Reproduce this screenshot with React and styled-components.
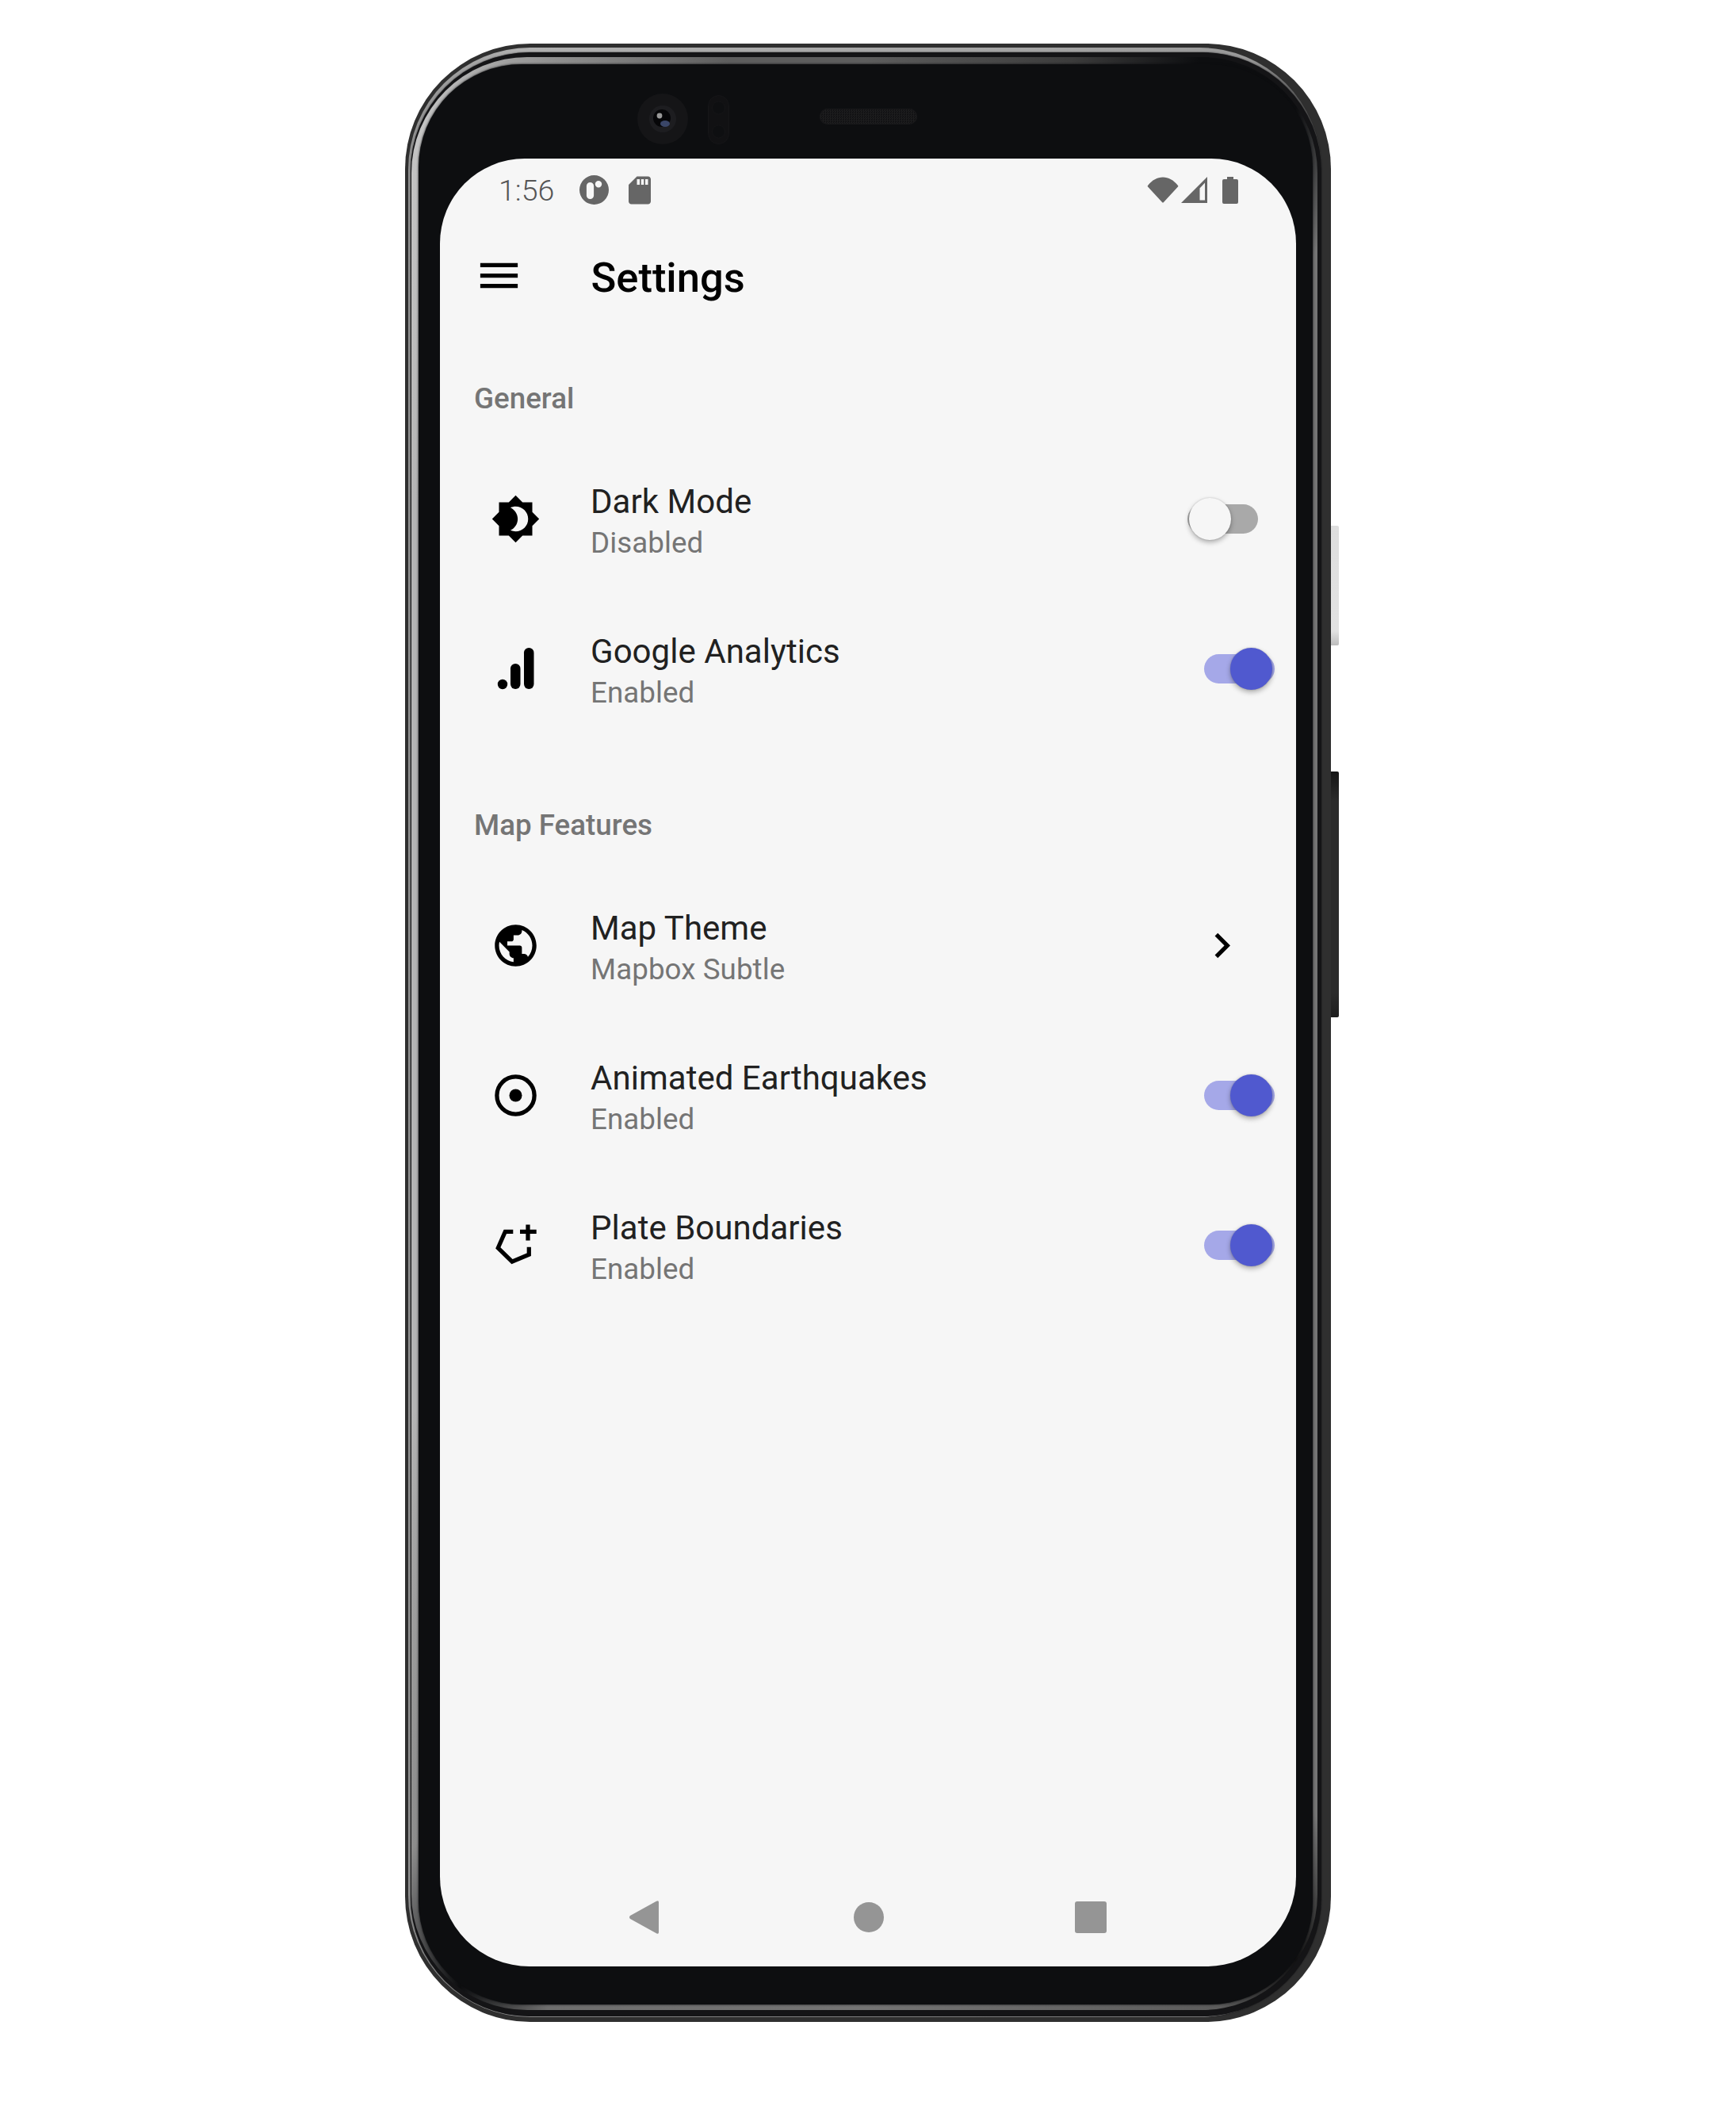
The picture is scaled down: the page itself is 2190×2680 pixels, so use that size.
import React from "react";
import styled, { createGlobalStyle } from "styled-components";

const Global = createGlobalStyle`
  html, body { margin: 0; padding: 0; background: #fff; }
  #root { width: 2190px; height: 2680px; }
`;

const Page = styled.div`
  width: 2190px;
  height: 2680px;
  box-sizing: border-box;
  padding: 55px 0 0 511px;
  background: #fff;
  font-family: Roboto, "Liberation Sans", sans-serif;
`;

const Frame = styled.div`
  position: relative;
  width: 1168px;
  height: 2495px;
  box-sizing: border-box;
  padding: 5px 12px 6px 4px;
  background: #2f2f2f;
  border-radius: 158px;
`;

const SideButton = styled.div`
  position: absolute;
  left: 100%;
  top: ${(p) => p.$top}px;
  width: 10px;
  height: ${(p) => p.$height}px;
  border-radius: 0 2px 2px 0;
  background: ${(p) =>
    p.$light
      ? "linear-gradient(to bottom, #dedede 0, #e2e2e2 88%, #bdbdbd 100%), #e0e0e0"
      : "linear-gradient(to bottom, #161616 0, #2b2b2b 12%, #2b2b2b 90%, #1e1e1e 100%)"};
`;

const OuterStripe = styled.div`
  height: 100%;
  box-sizing: border-box;
  padding: 6px 0 1px 3px;
  border-radius: 154px;
  background: linear-gradient(to right, #909090 0, #b0b0b0 12%, #a4a4a4 70%, #999 92%, #444 100%);
`;

const DarkGap = styled.div`
  height: 100%;
  box-sizing: border-box;
  padding: 6px 5px 8px 1px;
  border-radius: 150px;
  background: #141416;
  box-shadow: 0 0 2px #141416;
`;

const InnerStripe = styled.div`
  height: 100%;
  box-sizing: border-box;
  padding: 9px 6px 7px 9px;
  border-radius: 146px;
  background: conic-gradient(
    #5e5e5e 0deg,
    #3c3c3c 12deg,
    #0d0e10 19deg,
    #0d0e10 25deg,
    #747474 30deg,
    #747474 150deg,
    #111 155deg,
    #5c5c5c 160deg,
    #747474 180deg,
    #6e6e6e 198deg,
    #0d0e10 203deg,
    #8c8c8c 209deg,
    #b4b4b4 230deg,
    #b4b4b4 320deg,
    #c4c4c4 334deg,
    #929292 342deg,
    #5e5e5e 352deg
  );
`;

const Bezel = styled.div`
  height: 100%;
  box-sizing: border-box;
  padding: 0 21px 48px 27px;
  border-radius: 130px;
  background: #0d0e10;
  box-shadow: 0 0 3px #0d0e10;
`;

const TopStrip = styled.div`
  height: 119px;
  box-sizing: border-box;
  padding: 37px 0 0 249px;
  display: flex;
  align-items: flex-start;
`;

const CameraSvg = styled.svg`
  width: 64px;
  height: 64px;
  flex: none;
`;

const SensorPill = styled.svg`
  width: 27px;
  height: 62px;
  margin: 2px 0 0 25px;
  flex: none;
`;

const Speaker = styled.div`
  width: 123px;
  height: 20px;
  margin: 19px 0 0 114px;
  flex: none;
  border-radius: 10px;
  box-shadow: inset 0 0 0 1px #18181a;
  background: repeating-conic-gradient(#1d1d1e 0 25%, #111113 0 50%) 0 0 / 3px 3px;
`;

const Screen = styled.div`
  width: 1080px;
  height: 2280px;
  display: flex;
  flex-direction: column;
  overflow: hidden;
  border-radius: 107px 107px 113px 113px;
  background: #f6f6f6;
`;

const StatusBar = styled.div`
  height: 63px;
  flex: none;
  box-sizing: border-box;
  padding: 16px 73px 0 74px;
  display: flex;
  align-items: center;
  justify-content: space-between;
  color: #666;
`;

const StatusGroup = styled.div`
  display: flex;
  align-items: center;
  gap: ${(p) => p.$gap || 0}px;
`;

const Time = styled.span`
  width: 71px;
  margin-right: 31px;
  font-size: 37.5px;
  font-weight: 300;
  line-height: 40px;
  color: #555;
  white-space: nowrap;
`;

const StatusIcon = styled.svg`
  display: block;
  flex: none;
  fill: #666;
  margin-left: ${(p) => p.$ml || 0}px;
`;

const AppBar = styled.div`
  height: 168px;
  flex: none;
  display: flex;
  align-items: center;
`;

const MenuIcon = styled.svg`
  width: 63px;
  height: 63px;
  margin-left: 42.5px;
  flex: none;
  fill: #000;
`;

const Title = styled.h1`
  margin: 6px 0 0 85px;
  font-size: 52.5px;
  font-weight: 500;
  line-height: 60px;
  color: #000;
`;

const SectionLabel = styled.div`
  height: 129px;
  flex: none;
  box-sizing: border-box;
  margin-top: ${(p) => p.$mt || 0}px;
  padding: 50px 0 0 43px;
  font-size: 36.75px;
  font-weight: 500;
  line-height: 44px;
  color: #757575;
`;

const Row = styled.div`
  height: 189.3px;
  flex: none;
  display: flex;
  align-items: center;
  box-sizing: border-box;
  padding: 0 27px 0 64px;
`;

const RowIcon = styled.svg`
  width: 63px;
  height: 63px;
  flex: none;
  fill: #000;
`;

const RowText = styled.div`
  flex: 1;
  margin-left: 63px;
  padding-top: 5px;
`;

const RowTitle = styled.div`
  font-size: 42px;
  line-height: 55px;
  letter-spacing: 0.03px;
  color: #212121;
`;

const RowSub = styled.div`
  font-size: 36.75px;
  line-height: 49px;
  letter-spacing: 0.06px;
  color: #757575;
`;

const Track = styled.div`
  position: relative;
  width: 89px;
  height: 37px;
  flex: none;
  margin-right: ${(p) => (p.$on ? 0 : 21)}px;
  border-radius: 18.5px;
  background: ${(p) => (p.$on ? "#a5a8e8" : "#a9a9a9")};
`;

const Thumb = styled.div`
  position: absolute;
  top: -8px;
  left: ${(p) => (p.$on ? 33.4 : 1.5)}px;
  width: 53px;
  height: 53px;
  border-radius: 50%;
  background: ${(p) => (p.$on ? "#5059cf" : "#f6f6f6")};
  box-shadow: 0 3px 6px rgba(0, 0, 0, 0.3), 0 0 2px rgba(0, 0, 0, 0.2);
`;

const Chevron = styled.svg`
  width: 63px;
  height: 63px;
  flex: none;
  margin-right: 35px;
  fill: #000;
`;

const Spacer = styled.div`
  flex: 1;
`;

const NavBar = styled.div`
  height: 126px;
  flex: none;
  box-sizing: border-box;
  padding: 0 0 0 239px;
  display: flex;
  align-items: center;
  margin-bottom: -1px;
`;

const NavBack = styled.svg`
  width: 37px;
  height: 42px;
  flex: none;
  fill: #959595;
`;

const NavHome = styled.div`
  width: 38px;
  height: 38px;
  margin-left: 246px;
  flex: none;
  border-radius: 50%;
  background: #959595;
`;

const NavRecent = styled.div`
  width: 40px;
  height: 40px;
  margin-left: 241px;
  flex: none;
  border-radius: 3px;
  background: #959595;
`;

const Switch = ({ on }) => (
  <Track $on={on}>
    <Thumb $on={on} />
  </Track>
);

const icons = {
  dark: (
    <path d="M20 8.69V4h-4.69L12 .69 8.69 4H4v4.69L.69 12 4 15.31V20h4.69L12 23.31 15.31 20H20v-4.69L23.31 12 20 8.69zM12 18c-.89 0-1.74-.2-2.5-.55C11.56 16.5 13 14.42 13 12s-1.44-4.5-3.5-5.45C10.26 6.2 11.11 6 12 6c3.31 0 6 2.69 6 6s-2.69 6-6 6z" />
  ),
  analytics: (
    <g transform="scale(0.38095) translate(0 1)">
      <circle cx="15" cy="50" r="6.2" />
      <rect x="25" y="24" width="12.5" height="32" rx="6.2" />
      <rect x="42" y="4" width="12.5" height="52" rx="6.2" />
    </g>
  ),
  globe: (
    <path d="M12 2C6.48 2 2 6.48 2 12s4.48 10 10 10 10-4.48 10-10S17.52 2 12 2zm-1 17.93c-3.95-.49-7-3.85-7-7.93 0-.62.08-1.21.21-1.79L9 15v1c0 1.1.9 2 2 2v1.93zm6.9-2.54c-.26-.81-1-1.39-1.9-1.39h-1v-3c0-.55-.45-1-1-1H8v-2h2c.55 0 1-.45 1-1V7h2c1.1 0 2-.9 2-2v-.41c2.93 1.19 5 4.06 5 7.41 0 2.08-.8 3.97-2.1 5.39z" />
  ),
  target: (
    <>
      <circle cx="12" cy="12" r="3.05" />
      <circle cx="12" cy="12" r="9" fill="none" stroke="#000" strokeWidth="2" />
    </>
  ),
  plate: (
    <g transform="scale(0.38095)" fill="none" stroke="#000" strokeWidth="5.25">
      <path d="M28.3 14.5H18.3L9.3 34.8 27 52.2 48.3 43.2V33.8" />
      <path d="M47 5.5V25.5M37 14.5H57.7" />
    </g>
  ),
};

const SettingRow = ({ icon, title, sub, on, chevron }) => (
  <Row>
    <RowIcon viewBox="0 0 24 24">{icons[icon]}</RowIcon>
    <RowText>
      <RowTitle>{title}</RowTitle>
      <RowSub>{sub}</RowSub>
    </RowText>
    {chevron ? (
      <Chevron viewBox="0 0 24 24">
        <path d="M10 6L8.59 7.41 13.17 12l-4.58 4.59L10 18l6-6z" />
      </Chevron>
    ) : (
      <Switch on={on} />
    )}
  </Row>
);

export default function App() {
  return (
    <Page>
      <Global />
      <Frame>
        <SideButton $light $top={608} $height={151} />
        <SideButton $top={918} $height={310} />
        <OuterStripe>
          <DarkGap>
            <InnerStripe>
              <Bezel>
                <TopStrip>
                  <CameraSvg viewBox="0 0 64 64">
                    <circle cx="32" cy="32" r="32" fill="#151517" />
                    <circle cx="32" cy="32" r="17" fill="#1d1d20" />
                    <circle cx="31" cy="31" r="11" fill="#060608" />
                    <ellipse cx="35" cy="38" rx="6" ry="4" fill="#3a4668" />
                    <circle cx="28" cy="28" r="3.4" fill="#999" />
                  </CameraSvg>
                  <SensorPill viewBox="0 0 27 62">
                    <rect x="0.5" y="0.5" width="26" height="61" rx="13" fill="#111113" stroke="#161618" />
                    <circle cx="13.5" cy="16" r="8" fill="#0e0f11" stroke="#151517" />
                    <circle cx="13.5" cy="46" r="8" fill="#0e0f11" stroke="#151517" />
                  </SensorPill>
                  <Speaker />
                </TopStrip>
                <Screen>
                  <StatusBar>
                    <StatusGroup>
                      <Time>1:56</Time>
                      <StatusIcon width="37" height="37" viewBox="0 0 37 37">
                        <path
                          fillRule="evenodd"
                          d="M18.5 0a18.5 18.5 0 1 0 0 37 18.5 18.5 0 0 0 0-37zM13.5 9a4.6 4.6 0 0 1 4.6 4.6v11.8a4.6 4.6 0 0 1-9.2 0V13.6A4.6 4.6 0 0 1 13.5 9zM24 7a4.2 4.2 0 1 1 0 8.4 4.2 4.2 0 0 1 0-8.4z"
                        />
                      </StatusIcon>
                      <StatusIcon $ml={18} width="42" height="42" viewBox="0 0 24 24">
                        <path d="M18 2h-8L4.02 8 4 20c0 1.1.9 2 2 2h12c1.1 0 2-.9 2-2V4c0-1.1-.9-2-2-2zm-6 6h-2V4h2v4zm3 0h-2V4h2v4zm3 0h-2V4h2v4z" />
                      </StatusIcon>
                    </StatusGroup>
                    <StatusGroup>
                      <StatusIcon width="40" height="33" viewBox="0 0 40 33">
                        <path d="M1 11C6.5 4 13 .5 20 .5S33.500 4 39 11c.4.5.4 1 0 1.500L21 32q-1 1.200-2 0L1 12.500c-.4-.5-.4-1 0-1.500z" />
                      </StatusIcon>
                      <StatusIcon $ml={3} width="33" height="33" viewBox="0 0 33 33">
                        <path fillRule="evenodd" d="M0 33H33V0zM30 7.500L23.500 14.500V29.500H30z" />
                      </StatusIcon>
                      <StatusIcon $ml={19} width="20" height="34" viewBox="0 0 20 34">
                        <path d="M6 0h8v3h4a2 2 0 0 1 2 2v27a2 2 0 0 1-2 2H2a2 2 0 0 1-2-2V5a2 2 0 0 1 2-2h4z" />
                      </StatusIcon>
                    </StatusGroup>
                  </StatusBar>
                  <AppBar>
                    <MenuIcon viewBox="0 0 24 24">
                      <path d="M3 18h18v-2H3v2zm0-5h18v-2H3v2zm0-7v2h18V6H3z" />
                    </MenuIcon>
                    <Title>Settings</Title>
                  </AppBar>
                  <SectionLabel>General</SectionLabel>
                  <SettingRow icon="dark" title="Dark Mode" sub="Disabled" on={false} />
                  <SettingRow icon="analytics" title="Google Analytics" sub="Enabled" on />
                  <SectionLabel $mt={30}>Map Features</SectionLabel>
                  <SettingRow icon="globe" title="Map Theme" sub="Mapbox Subtle" chevron />
                  <SettingRow icon="target" title="Animated Earthquakes" sub="Enabled" on />
                  <SettingRow icon="plate" title="Plate Boundaries" sub="Enabled" on />
                  <Spacer />
                  <NavBar>
                    <NavBack viewBox="0 0 37 42">
                      <path d="M1 19 L34 .8 Q37 -.8 37 2 V40 Q37 42.800 34 41.200 L1 23 Q-1 21 1 19Z" />
                    </NavBack>
                    <NavHome />
                    <NavRecent />
                  </NavBar>
                </Screen>
              </Bezel>
            </InnerStripe>
          </DarkGap>
        </OuterStripe>
      </Frame>
    </Page>
  );
}
